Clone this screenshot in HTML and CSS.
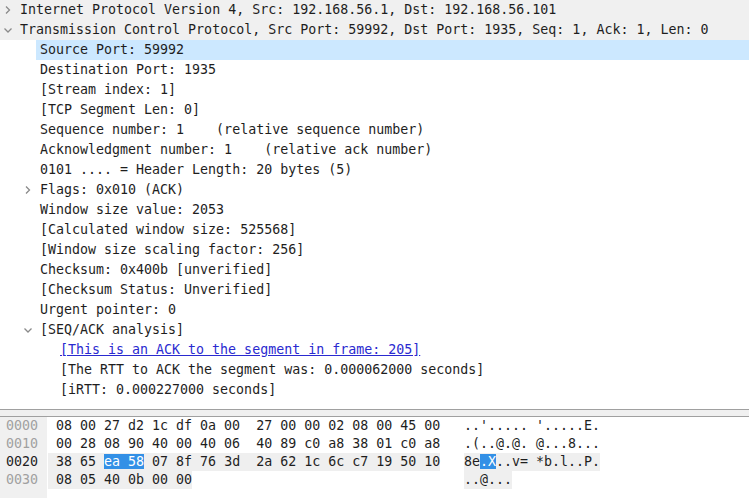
FILE: index.html
```html
<!DOCTYPE html>
<html>
<head>
  <title>Packet Details</title>
  <link rel="stylesheet" href="styles.css">
</head>
<body>
  <!-- Packet detail tree -->
  <div class="tree">
    <div class="row parent lv0">
      <span class="tog"><svg width="16" height="20"><path d="M6 6.5 L9.5 10 L6 13.5" class="chev"/></svg></span>
      <span class="label">Internet Protocol Version 4, Src: 192.168.56.1, Dst: 192.168.56.101</span>
    </div>
    <div class="row parent lv0">
      <span class="tog"><svg width="16" height="20"><path d="M4.5 8.5 L8 12 L11.5 8.5" class="chev"/></svg></span>
      <span class="label">Transmission Control Protocol, Src Port: 59992, Dst Port: 1935, Seq: 1, Ack: 1, Len: 0</span>
    </div>
    <div class="row lv1"><span class="tog"></span><span class="label selected">Source Port: 59992</span></div>
    <div class="row lv1"><span class="tog"></span><span class="label">Destination Port: 1935</span></div>
    <div class="row lv1"><span class="tog"></span><span class="label">[Stream index: 1]</span></div>
    <div class="row lv1"><span class="tog"></span><span class="label">[TCP Segment Len: 0]</span></div>
    <div class="row lv1"><span class="tog"></span><span class="label">Sequence number: 1    (relative sequence number)</span></div>
    <div class="row lv1"><span class="tog"></span><span class="label">Acknowledgment number: 1    (relative ack number)</span></div>
    <div class="row lv1"><span class="tog"></span><span class="label">0101 .... = Header Length: 20 bytes (5)</span></div>
    <div class="row lv1">
      <span class="tog"><svg width="16" height="20"><path d="M6 6.5 L9.5 10 L6 13.5" class="chev"/></svg></span>
      <span class="label">Flags: 0x010 (ACK)</span>
    </div>
    <div class="row lv1"><span class="tog"></span><span class="label">Window size value: 2053</span></div>
    <div class="row lv1"><span class="tog"></span><span class="label">[Calculated window size: 525568]</span></div>
    <div class="row lv1"><span class="tog"></span><span class="label">[Window size scaling factor: 256]</span></div>
    <div class="row lv1"><span class="tog"></span><span class="label">Checksum: 0x400b [unverified]</span></div>
    <div class="row lv1"><span class="tog"></span><span class="label">[Checksum Status: Unverified]</span></div>
    <div class="row lv1"><span class="tog"></span><span class="label">Urgent pointer: 0</span></div>
    <div class="row lv1">
      <span class="tog"><svg width="16" height="20"><path d="M4.5 8.5 L8 12 L11.5 8.5" class="chev"/></svg></span>
      <span class="label">[SEQ/ACK analysis]</span>
    </div>
    <div class="row lv2"><span class="tog"></span><span class="label link">[This is an ACK to the segment in frame: 205]</span></div>
    <div class="row lv2"><span class="tog"></span><span class="label">[The RTT to ACK the segment was: 0.000062000 seconds]</span></div>
    <div class="row lv2"><span class="tog"></span><span class="label">[iRTT: 0.000227000 seconds]</span></div>
  </div>

  <div class="splitter"></div>

  <!-- Bytes pane -->
  <div class="bytes">
    <div class="offsets">
      <div>0000</div>
      <div>0010</div>
      <div class="cur">0020</div>
      <div>0030</div>
    </div>
    <div class="hex">
      <div> 08 00 27 d2 1c df 0a 00  27 00 00 02 08 00 45 00</div>
      <div> 00 28 08 90 40 00 40 06  40 89 c0 a8 38 01 c0 a8</div>
      <div><span class="hl"> 38 65 <span class="sel">ea 58</span> 07 8f 76 3d  2a 62 1c 6c c7 19 50 10</span></div>
      <div><span class="hl"> 08 05 40 0b 00 00</span></div>
    </div>
    <div class="ascii">
      <div>..'..... '.....E.</div>
      <div>.(..@.@. @...8...</div>
      <div><span class="hl">8e<span class="sel">.X</span>..v= *b.l..P.</span></div>
      <div><span class="hl">..@...</span></div>
    </div>
  </div>
</body>
</html>
```

FILE: styles.css
```css
body { margin: 0; background: #fff; color: #1e1e1e; font-family: "DejaVu Sans Mono", monospace; font-size: 13.3px; }

.tree { height: 409px; overflow: hidden; }
.row { display: flex; height: 20px; line-height: 20px; }
.row.parent { background: #f0f0f0; }
.lv1 { padding-left: 20px; }
.lv2 { padding-left: 40px; }
.tog { width: 16px; height: 20px; flex: none; }
.tog svg { display: block; }
.chev { fill: none; stroke: #8a8a8a; stroke-width: 1.3; }
.label { flex: 1; padding-left: 4px; white-space: pre; }
.label.selected { background: #cce8ff; }
.label.link { color: #2a2ad0; text-decoration: underline; flex: none; }

.splitter { height: 6px; background: #f0f0f0; border-top: 1px solid #a0a0a0; border-bottom: 1px solid #a0a0a0; }

.bytes { display: flex; height: 81px; line-height: 18px; }
.bytes div div { white-space: pre; height: 18px; }
.offsets { width: 41px; padding-left: 6px; background: #f0f0f0; color: #a0a0a0; }
.offsets .cur { color: #1e1e1e; }
.hex { margin-left: 1px; width: 392px; }
.ascii { margin-left: 24px; }
.hl { display: inline-block; background: #efefef; }
.sel { background: #3390e6; color: #fff; }
```
